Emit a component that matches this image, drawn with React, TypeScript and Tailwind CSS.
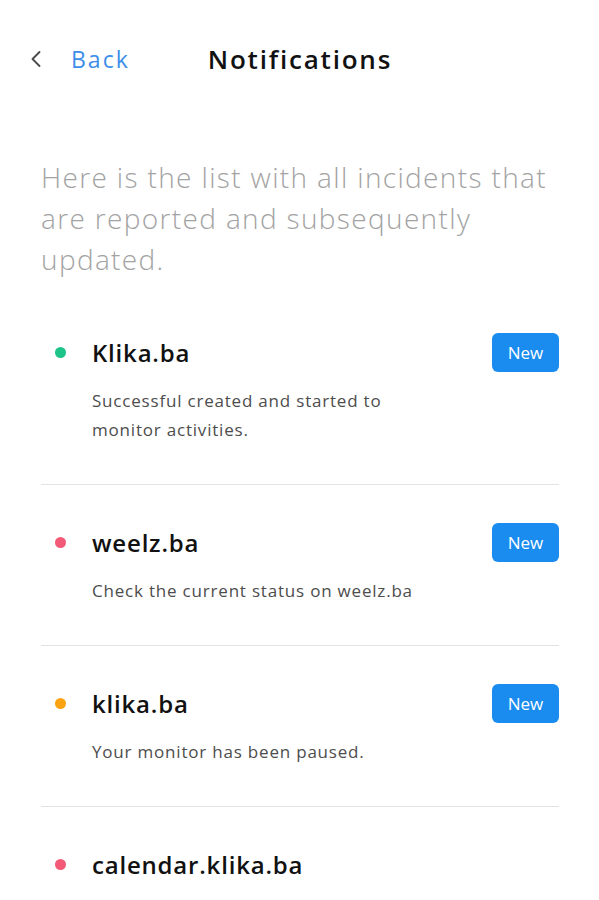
import { ChevronLeft } from "lucide-react";

type Item = {
  id: number;
  title: string;
  text: string;
  dot: string;
  isNew: boolean;
};

const items: Item[] = [
  { id: 1, title: "Klika.ba", text: "Successful created and started to monitor activities.", dot: "bg-[#1dc389]", isNew: true },
  { id: 2, title: "weelz.ba", text: "Check the current status on weelz.ba", dot: "bg-[#f25a78]", isNew: true },
  { id: 3, title: "klika.ba", text: "Your monitor has been paused.", dot: "bg-[#fca311]", isNew: true },
  { id: 4, title: "calendar.klika.ba", text: "", dot: "bg-[#f25a78]", isNew: false },
];

export default function App() {
  return (
    <div
      className="w-[599px] h-[900px] overflow-hidden bg-white"
      style={{ fontFamily: '"Open Sans", "Noto Sans", sans-serif' }}
    >
      {/* Header */}
      <div className="flex items-center h-[60px] mt-[29px] pl-[22px]">
        <button className="flex items-center text-[#4a4a4a]">
          <ChevronLeft className="w-[28px] h-[28px]" strokeWidth={1.6} />
        </button>
        <span className="ml-[21px] text-[23px] text-[#3d8ee8] tracking-[2px]">Back</span>
        <span className="ml-[78px] text-[26px] font-semibold text-[#111] tracking-[1.8px]">Notifications</span>
      </div>

      {/* Intro */}
      <div className="pl-[41px] pr-[40px] mt-[68px]">
        <p className="text-[28px] leading-[41px] font-light text-[#a3a3a3] tracking-[1.35px]">
          Here is the list with all incidents that are reported and subsequently updated.
        </p>
      </div>

      {/* List */}
      <div className="pl-[41px] pr-[40px] mt-[53px]">
        {items.map((item, i) => (
          <div
            key={item.id}
            className={`${i < items.length - 1 ? "border-b border-[#e3e3e3] pb-[40px]" : ""} ${i === 0 ? "pt-0" : "pt-[38px]"}`}
          >
            <div className="flex items-center h-[39px]">
              <span className={`w-[11px] h-[11px] rounded-full ml-[14px] ${item.dot}`} />
              <span className="ml-[26px] text-[24px] font-semibold text-[#111] tracking-[0.8px]">{item.title}</span>
              {item.isNew && (
                <span className="ml-auto w-[67px] h-[39px] rounded-[6px] bg-[#1a8cf0] text-white text-[17px] flex items-center justify-center">
                  New
                </span>
              )}
            </div>
            {item.text && (
              <p className="ml-[51px] mt-[14px] max-w-[345px] text-[17px] leading-[29px] text-[#4d4d4d] tracking-[0.8px]">
                {item.text}
              </p>
            )}
          </div>
        ))}
      </div>
    </div>
  );
}
